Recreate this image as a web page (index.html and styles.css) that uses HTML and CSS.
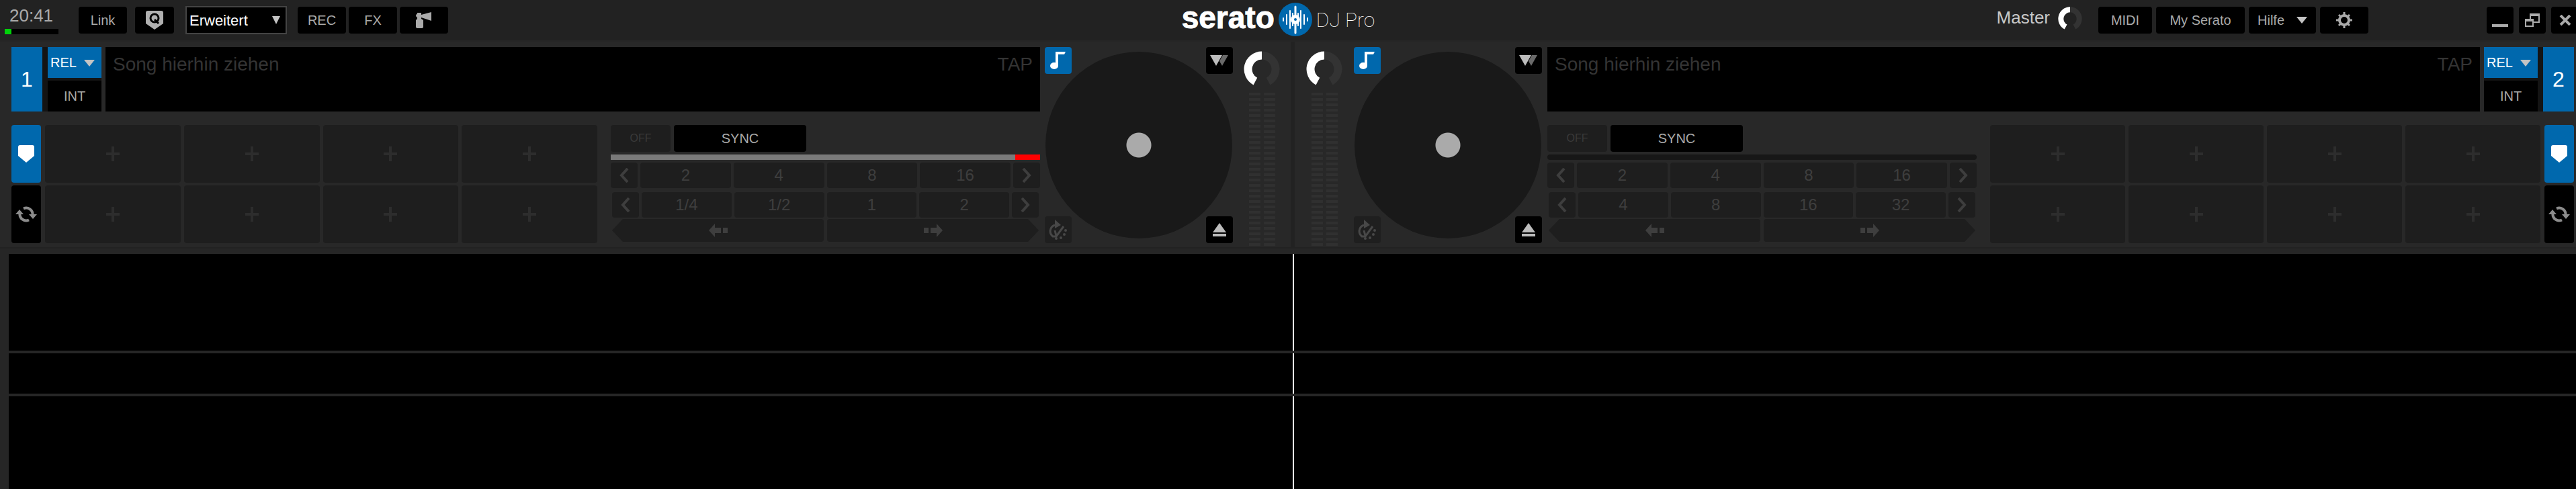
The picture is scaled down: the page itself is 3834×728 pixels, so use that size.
FILE: index.html
```html
<!DOCTYPE html>
<html lang="de">
<head>
    <meta charset="UTF-8">
    <meta name="viewport" content="width=device-width, initial-scale=1.0">
    <title>Serato DJ Pro</title>
    <link rel="stylesheet" href="styles.css">
</head>
<body>
    <svg class="sprite" aria-hidden="true">
        <symbol id="note" viewBox="0 0 24 26">
            <ellipse cx="6" cy="21" rx="6" ry="5"/>
            <path d="M8 0H23L21 4H12V21H8z"/>
        </symbol>
        <symbol id="keylock" viewBox="0 0 28 16">
            <path d="M0 0H18L9 16z"/>
            <path d="M19 0H27L18 16L14 9z" fill="#6a6a6a"/>
        </symbol>
        <symbol id="eject" viewBox="0 0 20 20">
            <path d="M10 0L20 14H0zM0 16H20V20H0z"/>
        </symbol>
        <symbol id="slip" viewBox="0 0 28 30">
            <path d="M9 0L18 8L9 13z"/>
            <path d="M9 8C1 11 0 20 6 25H11L22 10M9 16L11 24" fill="none" stroke="currentColor" stroke-width="3"/>
            <circle cx="25" cy="16" r="2"/>
            <circle cx="23" cy="22" r="2"/>
            <circle cx="18" cy="27" r="2"/>
            <circle cx="11" cy="28" r="2"/>
        </symbol>
        <symbol id="cue" viewBox="0 0 24 26">
            <path d="M3 0H21Q24 0 24 3V16L12 26L0 16V3Q0 0 3 0z"/>
        </symbol>
        <symbol id="loop" viewBox="0 0 32 24">
            <path d="M6.500 11A9.500 9.500 0 0 0 20 20.500M25.500 13A9.500 9.500 0 0 0 12 3.500" fill="none" stroke="currentColor" stroke-width="4"/>
            <path d="M0 12L6 5L12 12zM20 12H32L26 19z"/>
        </symbol>
        <symbol id="prev" viewBox="0 0 16 22">
            <path d="M13 1L4 11L13 21" fill="none" stroke="currentColor" stroke-width="4"/>
        </symbol>
        <symbol id="next" viewBox="0 0 16 22">
            <path d="M3 1L12 11L3 21" fill="none" stroke="currentColor" stroke-width="4"/>
        </symbol>
        <symbol id="back" viewBox="0 0 28 20">
            <path d="M0 10L9 0V6H18V14H9V20zM21 6H28V14H21z"/>
        </symbol>
        <symbol id="forward" viewBox="0 0 28 20">
            <path d="M28 10L19 0V6H10V14H19V20zM7 6H0V14H7z"/>
        </symbol>
        <symbol id="plus" viewBox="0 0 20 22">
            <path d="M0 9H8V0H12V9H20V13H12V22H8V13H0z"/>
        </symbol>
        <symbol id="down" viewBox="0 0 16 10">
            <path d="M0 0H16L8 10z"/>
        </symbol>
        <symbol id="knob" viewBox="0 0 54 54">
            <path d="M27 6.500A20.500 20.500 0 0 1 36.600 45.100" fill="none" stroke="#333" stroke-width="12"/>
            <path d="M17.400 45.100A20.500 20.500 0 0 1 27 6.500" fill="none" stroke="#fff" stroke-width="12"/>
        </symbol>
    </svg>

    <header class="topbar">
        <div class="group left">
            <div class="clock">
                <time>20:41</time>
                <div class="cpu"><span></span></div>
            </div>
            <button class="btn link">Link</button>
            <button class="btn q" aria-label="Q">
                <svg width="26" height="28" viewBox="0 0 26 28">
                    <path d="M3 0H23Q26 0 26 3V19L13 28L0 19V3Q0 0 3 0z" fill="#b0b0b0"/>
                    <circle cx="13" cy="11" r="6" fill="none" stroke="#000" stroke-width="3"/>
                    <path d="M13 13L19 19" stroke="#000" stroke-width="3"/>
                </svg>
            </button>
            <div class="view">
                <select aria-label="Ansicht">
                    <option>Erweitert</option>
                </select>
                <svg width="12" height="12" viewBox="0 0 12 12"><path d="M0 0H12L6 12z"/></svg>
            </div>
            <button class="btn">REC</button>
            <button class="btn">FX</button>
            <button class="btn" aria-label="Air horn">
                <svg width="24" height="24" viewBox="0 0 24 24">
                    <path d="M2 1H8V4L23 0V13L8 8V10L11 12V22Q11 24 9 24H2Q0 24 0 22V12L2 10V8Q0 7 0 5Q0 3 2 3z"/>
                </svg>
            </button>
        </div>

        <div class="logo">
            <strong>serato</strong>
            <svg width="50" height="50" viewBox="0 0 50 50">
                <circle cx="25" cy="25" r="25" fill="#0068ad"/>
                <path d="M25 6V45" stroke="#fff" stroke-width="3" stroke-linecap="round"/>
                <path d="M21 16V34M29 16V34M17 12V38M33 12V38M12 18V32M38 18V32M7 23V27M43 23V27" stroke="#fff" stroke-width="2" stroke-linecap="round"/>
                <circle cx="25" cy="25" r="7" fill="#fff"/>
                <circle cx="25" cy="25" r="2" fill="#0068ad"/>
            </svg>
            <span>DJ Pro</span>
        </div>

        <div class="group right">
            <span class="master">Master</span>
            <svg class="masterKnob" width="36" height="36"><use href="#knob"/></svg>
            <button class="btn midi">MIDI</button>
            <button class="btn account">My Serato</button>
            <button class="btn help">Hilfe <svg width="16" height="10"><use href="#down"/></svg></button>
            <button class="btn" aria-label="Setup">
                <svg width="24" height="24" viewBox="0 0 24 24">
                    <circle cx="12" cy="12" r="7" fill="none" stroke="currentColor" stroke-width="4"/>
                    <path d="M12 0V5M12 19V24M0 12H5M19 12H24M4 4L7 7M17 17L20 20M4 20L7 17M17 7L20 4" stroke="currentColor" stroke-width="3"/>
                </svg>
            </button>
            <div class="window">
                <button class="btn" aria-label="Minimieren">
                    <svg width="24" height="20" viewBox="0 0 24 20"><path d="M0 16H24V20H0z"/></svg>
                </button>
                <button class="btn" aria-label="Wiederherstellen">
                    <svg width="22" height="20" viewBox="0 0 22 20">
                        <path d="M7 8V0H22V14H13V12H20V4H9V8zM0 8H13V20H0zM2 12V18H11V12z" fill-rule="evenodd"/>
                    </svg>
                </button>
                <button class="btn close" aria-label="Schließen">
                    <svg width="18" height="16" viewBox="0 0 18 16"><path d="M2 1L16 15M16 1L2 15" stroke="currentColor" stroke-width="4"/></svg>
                </button>
            </div>
        </div>
    </header>

    <main class="decks">
        <section class="deck" id="deck1">
            <div class="panel">
                <div class="info">
                    <div class="number">1</div>
                    <div class="modes">
                        <div class="rel">
                            <select aria-label="Modus Deck 1"><option>REL</option></select>
                            <svg width="16" height="10"><use href="#down"/></svg>
                        </div>
                        <button class="int">INT</button>
                    </div>
                    <div class="song"><span>Song hierhin ziehen</span><span>TAP</span></div>
                </div>
                <div class="lower">
                    <div class="tabs">
                        <button class="tab active" aria-label="Cues"><svg width="24" height="26"><use href="#cue"/></svg></button>
                        <button class="tab" aria-label="Loops"><svg width="32" height="24"><use href="#loop"/></svg></button>
                    </div>
                    <div class="pads"></div>
                    <div class="controls">
                        <div class="syncRow">
                            <button class="off" disabled>OFF</button>
                            <button class="sync">SYNC</button>
                        </div>
                        <div class="pitch on"><span></span></div>
                        <div class="beats">
                            <button aria-label="Zurück"><svg width="16" height="22"><use href="#prev"/></svg></button>
                            <button>2</button>
                            <button>4</button>
                            <button>8</button>
                            <button>16</button>
                            <button aria-label="Weiter"><svg width="16" height="22"><use href="#next"/></svg></button>
                        </div>
                        <div class="beats inset">
                            <button aria-label="Zurück"><svg width="16" height="22"><use href="#prev"/></svg></button>
                            <button>1/4</button>
                            <button>1/2</button>
                            <button>1</button>
                            <button>2</button>
                            <button aria-label="Weiter"><svg width="16" height="22"><use href="#next"/></svg></button>
                        </div>
                        <div class="jump">
                            <button class="back" aria-label="Beat Jump zurück"><svg width="28" height="20"><use href="#back"/></svg></button>
                            <button class="forward" aria-label="Beat Jump vor"><svg width="28" height="20"><use href="#forward"/></svg></button>
                        </div>
                    </div>
                </div>
            </div>
            <div class="platter">
                <div class="disc"></div>
                <button class="corner key" aria-label="Tonart"><svg width="24" height="26"><use href="#note"/></svg></button>
                <button class="corner" aria-label="Keylock"><svg width="28" height="16"><use href="#keylock"/></svg></button>
                <button class="corner slip" aria-label="Slip"><svg width="28" height="30"><use href="#slip"/></svg></button>
                <button class="corner" aria-label="Auswerfen"><svg width="20" height="20"><use href="#eject"/></svg></button>
            </div>
            <div class="gain">
                <svg width="54" height="54"><use href="#knob"/></svg>
                <div class="levels"><span></span><span></span></div>
            </div>
        </section>

        <section class="deck" id="deck2">
            <div class="gain">
                <svg width="54" height="54"><use href="#knob"/></svg>
                <div class="levels"><span></span><span></span></div>
            </div>
            <div class="platter">
                <div class="disc"></div>
                <button class="corner key" aria-label="Tonart"><svg width="24" height="26"><use href="#note"/></svg></button>
                <button class="corner" aria-label="Keylock"><svg width="28" height="16"><use href="#keylock"/></svg></button>
                <button class="corner slip" aria-label="Slip"><svg width="28" height="30"><use href="#slip"/></svg></button>
                <button class="corner" aria-label="Auswerfen"><svg width="20" height="20"><use href="#eject"/></svg></button>
            </div>
            <div class="panel">
                <div class="info">
                    <div class="song"><span>Song hierhin ziehen</span><span>TAP</span></div>
                    <div class="modes">
                        <div class="rel">
                            <select aria-label="Modus Deck 2"><option>REL</option></select>
                            <svg width="16" height="10"><use href="#down"/></svg>
                        </div>
                        <button class="int">INT</button>
                    </div>
                    <div class="number">2</div>
                </div>
                <div class="lower">
                    <div class="controls">
                        <div class="syncRow">
                            <button class="off" disabled>OFF</button>
                            <button class="sync">SYNC</button>
                        </div>
                        <div class="pitch"></div>
                        <div class="beats">
                            <button aria-label="Zurück"><svg width="16" height="22"><use href="#prev"/></svg></button>
                            <button>2</button>
                            <button>4</button>
                            <button>8</button>
                            <button>16</button>
                            <button aria-label="Weiter"><svg width="16" height="22"><use href="#next"/></svg></button>
                        </div>
                        <div class="beats inset">
                            <button aria-label="Zurück"><svg width="16" height="22"><use href="#prev"/></svg></button>
                            <button>4</button>
                            <button>8</button>
                            <button>16</button>
                            <button>32</button>
                            <button aria-label="Weiter"><svg width="16" height="22"><use href="#next"/></svg></button>
                        </div>
                        <div class="jump">
                            <button class="back" aria-label="Beat Jump zurück"><svg width="28" height="20"><use href="#back"/></svg></button>
                            <button class="forward" aria-label="Beat Jump vor"><svg width="28" height="20"><use href="#forward"/></svg></button>
                        </div>
                    </div>
                    <div class="pads"></div>
                    <div class="tabs">
                        <button class="tab active" aria-label="Cues"><svg width="24" height="26"><use href="#cue"/></svg></button>
                        <button class="tab" aria-label="Loops"><svg width="32" height="24"><use href="#loop"/></svg></button>
                    </div>
                </div>
            </div>
        </section>
    </main>

    <div class="waves">
        <div class="wave"></div>
        <div class="wave beatgrid"></div>
        <div class="wave last"></div>
    </div>

    <script>
        // 8 empty cue slots for each deck
        document.querySelectorAll(".pads").forEach((pads)=>{
            for (let i = 1; i <= 8; i++) {
                pads.innerHTML += `<button class="pad" aria-label="Cue ${i}"><svg width="20" height="22"><use href="#plus"/></svg></button>`;
            }
        })
    </script>
</body>
</html>
```

FILE: styles.css
```css
*{
    margin: 0;
    padding: 0;
    box-sizing: border-box;
}
body{
    min-height: 100vh;
    background-color: #262626;
    font-family: "Liberation Sans", Arial, sans-serif;
    font-size: 20px;
    color: #aaa;
    display: flex;
    flex-direction: column;
}
.sprite{
    position: absolute;
    width: 0;
    height: 0;
}
svg{
    display: block;
    flex: none;
    fill: currentColor;
}
button, select{
    border: none;
    outline: 0;
    font-family: inherit;
    font-size: 20px;
    color: #aaa;
    background-color: black;
    appearance: none;
}
button{
    display: flex;
    justify-content: center;
    align-items: center;
    border-radius: 4px;
}

/* top bar */
.topbar{
    height: 62px;
    padding-left: 7px;
    border-bottom: 2px solid #262626;
    background-color: #222;
    display: flex;
    align-items: center;
}
.group{
    flex: 1 1 0;
    display: flex;
    align-items: center;
    gap: 4px;
}
.right{
    justify-content: flex-end;
    gap: 6px;
}
.btn{
    width: 72px;
    height: 40px;
}
.clock{
    width: 80px;
    margin-right: 26px;
}
.clock time{
    display: block;
    padding-left: 7px;
    font-size: 26px;
    line-height: 28px;
}
.cpu{
    height: 8px;
    margin-top: 6px;
    background-color: black;
}
.cpu span{
    display: block;
    width: 10px;
    height: 8px;
    background-color: #00d20a;
}
.q{
    width: 58px;
    margin-left: 8px;
    margin-right: 13px;
}
.view{
    position: relative;
    margin-right: 12px;
}
.view select{
    width: 151px;
    height: 42px;
    padding-left: 4px;
    border: 2px solid #444;
    font-size: 22px;
    color: white;
}
.view svg{
    position: absolute;
    right: 10px;
    top: 15px;
    color: #c4c4c4;
    pointer-events: none;
}
.logo{
    margin-right: 36px;
    padding-bottom: 2px;
    display: flex;
    align-items: center;
    gap: 6px;
    color: white;
}
.logo strong{
    font-size: 46px;
    line-height: 50px;
    padding-bottom: 6px;
    -webkit-text-stroke: 1px white;
}
.logo span{
    font-family: Roboto, "Liberation Sans", sans-serif;
    font-weight: 100;
    font-size: 30px;
}
.master{
    padding-bottom: 8px;
    font-size: 26px;
    color: #c8c8c8;
}
.masterKnob{
    margin: 0 18px 4px 6px;
}
.midi{
    width: 80px;
}
.account{
    width: 132px;
}
.help{
    width: 100px;
    gap: 18px;
}
.help svg{
    color: #c4c4c4;
}
.window{
    margin-left: 170px;
    display: flex;
    gap: 8px;
}
.window .btn{
    width: 40px;
}
.window .close{
    width: 37px;
    padding-left: 4px;
    border-radius: 4px 0 0 4px;
}

/* decks */
.decks{
    padding: 0 3px 0 17px;
    margin-bottom: 8px;
    background-color: #282828;
    border-bottom: 2px solid #222;
    display: grid;
    grid-template-columns: 1fr 1fr;
}
.deck{
    padding: 8px 0 2px;
    display: flex;
}
#deck1{
    padding-right: 16px;
    border-right: 3px solid #222;
}
#deck2{
    padding-left: 17px;
    border-left: 3px solid #222;
}
.panel{
    flex: 1;
    min-width: 0;
}
.info{
    height: 96px;
    display: flex;
}
.number{
    width: 46px;
    background-color: #0068ad;
    color: white;
    font-size: 32px;
    display: flex;
    justify-content: center;
    align-items: center;
}
.modes{
    width: 88px;
    background-color: #141414;
    border-left: 8px solid #141414;
    display: flex;
    flex-direction: column;
    gap: 4px;
}
#deck2 .modes{
    border-left: none;
    border-right: 8px solid #141414;
}
.rel{
    position: relative;
    height: 46px;
}
.rel select{
    width: 100%;
    height: 46px;
    padding-left: 4px;
    border-radius: 0;
    background-color: #0068ad;
    color: white;
}
.rel svg{
    position: absolute;
    right: 10px;
    top: 19px;
    color: #c4c4c4;
    pointer-events: none;
}
.int{
    height: 46px;
    border-radius: 0;
}
.song{
    flex: 1;
    margin-left: 6px;
    padding: 10px 11px;
    background-color: black;
    color: #343434;
    font-size: 28px;
    display: flex;
    justify-content: space-between;
}
#deck2 .song{
    margin-left: 0;
    margin-right: 6px;
}
.lower{
    height: 176px;
    margin-top: 20px;
    display: flex;
}
.tabs{
    width: 44px;
    display: grid;
    grid-template-rows: 1fr 1fr;
    gap: 4px;
}
.tab{
    color: #8c8c8c;
}
.active{
    background-color: #0068ad;
    color: white;
}
.pads{
    flex: 1;
    margin: 0 20px 0 6px;
    display: grid;
    grid-template-columns: repeat(4, 1fr);
    grid-template-rows: 1fr 1fr;
    gap: 4px 5px;
}
#deck2 .pads{
    margin: 0 6px 0 20px;
}
.pad{
    background-color: #1e1e1e;
    color: #2d2d2d;
}

/* sync, beats and jump */
.controls{
    width: 639px;
    display: flex;
    flex-direction: column;
}
.syncRow{
    height: 40px;
    display: flex;
    gap: 5px;
}
.off{
    width: 89px;
    background-color: #1e1e1e;
    color: #3a3a3a;
    font-size: 16px;
}
.sync{
    width: 197px;
}
.pitch{
    height: 8px;
    margin: 4px 0;
    border-radius: 4px;
    background-color: #171717;
}
.on{
    border-radius: 0;
    background-color: #7a7a7a;
}
.pitch span{
    display: block;
    width: 37px;
    height: 8px;
    margin-left: auto;
    background-color: red;
}
.beats{
    height: 38px;
    margin-bottom: 6px;
    display: grid;
    grid-template-columns: 40px repeat(4, 1fr) 40px;
    gap: 4px;
}
.inset{
    margin: 0 2px 2px;
}
.beats button, .jump button{
    background-color: #1e1e1e;
    color: #3e3e3e;
    font-size: 24px;
}
.jump{
    height: 34px;
    margin: 0 2px;
    display: grid;
    grid-template-columns: 1fr 1fr;
    gap: 5px;
}
.back{
    clip-path: polygon(16px 0, 100% 0, 100% 100%, 16px 100%, 0 50%);
}
.forward{
    clip-path: polygon(0 0, calc(100% - 16px) 0, 100% 50%, calc(100% - 16px) 100%, 0 100%);
}

/* platter, its buttons sit in the four corners over the disc */
.platter{
    position: relative;
    width: 280px;
    height: 292px;
    margin: 0 16px 0 7px;
    display: grid;
    grid-template-columns: 40px 40px;
    justify-content: space-between;
    align-content: space-between;
}
#deck2 .platter{
    margin: 0 8px 0 17px;
}
.disc{
    position: absolute;
    left: 1px;
    top: 7px;
    width: 278px;
    height: 278px;
    border-radius: 50%;
    background: radial-gradient(circle, #aaa 18px, #191919 19px);
}
.corner{
    position: relative;
    height: 40px;
    color: #bcbcbc;
}
.key{
    background-color: #0068ad;
    color: white;
}
.slip{
    background-color: #1f1f1f;
    color: #484848;
}
.gain{
    width: 54px;
    padding-top: 6px;
}
.levels{
    height: 228px;
    margin-top: 8px;
    padding: 0 7px 0 8px;
    display: flex;
    justify-content: space-between;
}
.levels span{
    width: 17px;
    background: repeating-linear-gradient(#303030 0 4px, transparent 4px 8px);
}

/* waveforms */
.waves{
    flex: 1;
    margin-left: 13px;
    display: flex;
    flex-direction: column;
    gap: 4px;
}
.wave{
    position: relative;
    height: 144px;
    background-color: black;
}
.beatgrid{
    height: 60px;
}
.last{
    flex: 1;
}
.wave::after{
    content: "";
    position: absolute;
    left: 50%;
    top: 0;
    bottom: 0;
    width: 2px;
    background-color: white;
}
```
